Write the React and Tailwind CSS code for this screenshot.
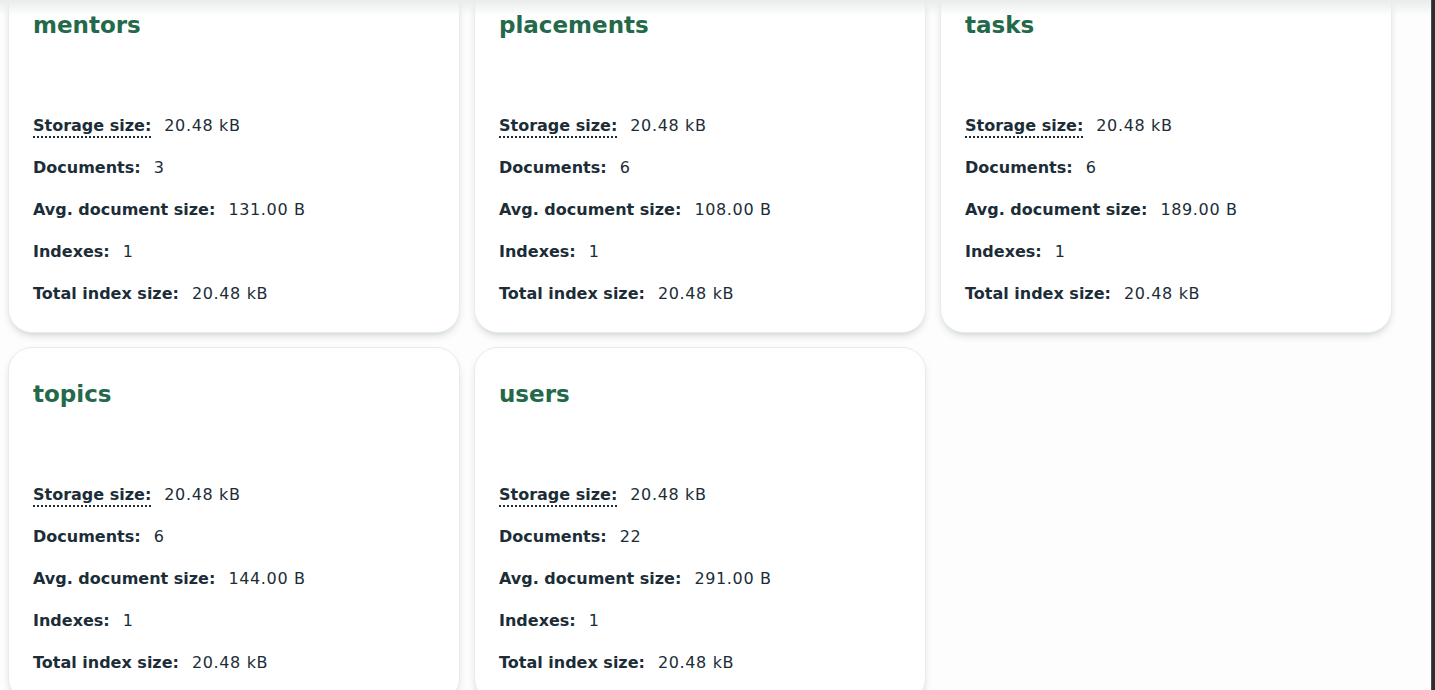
import React from 'react';

const collections = [
    { name: 'mentors', docs: '3', avg: '131.00 B' },
    { name: 'placements', docs: '6', avg: '108.00 B' },
    { name: 'tasks', docs: '6', avg: '189.00 B' },
    { name: 'topics', docs: '6', avg: '144.00 B' },
    { name: 'users', docs: '22', avg: '291.00 B' },
];

function Stat({ label, value, dotted }) {
    return (
        <div className="flex items-center leading-5 text-[16px] text-[#1C2D38]">
            <span className={`font-bold ${dotted ? 'underline decoration-dotted decoration-2 underline-offset-[5px]' : ''}`}>{label}</span>
            <span className="ml-[13px] tracking-[0.04em]">{value}</span>
        </div>
    );
}

function CollectionCard({ c }) {
    return (
        <div className="bg-white rounded-3xl border border-[#E8EDEB] shadow-[0_4px_10px_-4px_rgba(0,30,43,0.3)] pt-[30px] px-6 pb-[30px] h-[355px]">
            <h2 className="text-[23px] leading-8 font-bold text-[#23694a]">{c.name}</h2>
            <div className="mt-[75px] flex flex-col gap-[22px]">
                <Stat label="Storage size:" value="20.48 kB" dotted />
                <Stat label="Documents:" value={c.docs} />
                <Stat label="Avg. document size:" value={c.avg} />
                <Stat label="Indexes:" value="1" />
                <Stat label="Total index size:" value="20.48 kB" />
            </div>
        </div>
    );
}

export default function App() {
    return (
        <div className="h-[690px] w-full overflow-hidden flex bg-[#fdfdfd]" style={{ fontFamily: '"DejaVu Sans", "Liberation Sans", sans-serif' }}>
            <div className="relative flex-1 overflow-hidden">
                {/* header shadow from the scrolled-away toolbar */}
                <div className="absolute top-0 left-0 right-0 h-4 bg-gradient-to-b from-[#e9ecec] to-transparent z-10 pointer-events-none" />
                <div className="-mt-[22px] pl-2 grid grid-cols-[repeat(3,452px)] gap-[14px]">
                    {collections.map((c) => (
                        <CollectionCard key={c.name} c={c} />
                    ))}
                </div>
            </div>
            <div className="w-1 bg-[#2e2e2e] border-l border-[#4a4a4a]" />
        </div>
    );
}
